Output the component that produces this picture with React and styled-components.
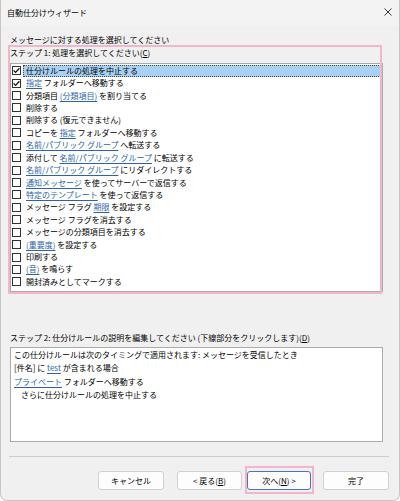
import React from 'react';
import styled, { createGlobalStyle } from 'styled-components';

const GlobalStyle = createGlobalStyle`
  html, body {
    margin: 0;
    padding: 0;
    background: #ffffff;
  }
  body {
    font-family: "Noto Sans CJK JP", "Noto Sans", sans-serif;
  }
`;

const Window = styled.div`
  width: 400px;
  height: 501px;
  box-sizing: border-box;
  background: #f0f0f0;
  border: 1px solid #c6c6c6;
  border-top: none;
  border-radius: 0 0 7px 7px;
  display: flex;
  flex-direction: column;
  font-size: 8px;
  color: #000000;
  overflow: hidden;
`;

const TitleBar = styled.div`
  height: 26px;
  flex-shrink: 0;
  background: #f3f3f3;
  display: flex;
  align-items: center;
  justify-content: space-between;
  padding: 0 7px 0 6px;
`;

const Title = styled.span`
  line-height: 12px;
`;

const CloseBtn = styled.div`
  width: 8px;
  height: 8px;
  display: flex;
  margin-bottom: 3px;
`;

const Content = styled.div`
  padding: 0 16px 0 9px;
  display: flex;
  flex-direction: column;
`;

const Prompt = styled.div`
  margin-top: 8px;
  line-height: 12px;
`;

const Section = styled.div`
  position: relative;
  margin-top: ${(p) => p.$mt || 0}px;

  &::after {
    content: '';
    display: ${(p) => (p.$marked ? 'block' : 'none')};
    position: absolute;
    left: -2.5px;
    top: -2px;
    right: 1.5px;
    bottom: -1.5px;
    border: 2px solid #f4b4ca;
    pointer-events: none;
  }
`;

const Label = styled.div`
  line-height: 12px;
`;

const U = styled.span`
  text-decoration: underline;
  text-underline-offset: 1px;
`;

const Link = styled.span`
  color: #2b63ae;
  text-decoration: underline;
  text-underline-offset: 1.5px;
`;

const ListBox = styled.div`
  margin-top: 4px;
  height: 229px;
  box-sizing: border-box;
  background: #ffffff;
  border: 1px solid #ababab;
  padding-top: 0.5px;
`;

const Row = styled.div`
  height: 12.43px;
  display: flex;
  align-items: center;
`;

const Box = styled.div`
  width: 9px;
  height: 9px;
  box-sizing: border-box;
  border: 1px solid #333333;
  background: #ffffff;
  margin-left: 1px;
  flex-shrink: 0;
  display: flex;
`;

const RowText = styled.div`
  flex: 1;
  margin: 0 1px 0 2px;
  padding-left: 2px;
  height: 12px;
  line-height: 10px;
  box-sizing: border-box;
  white-space: nowrap;
  background: ${(p) => (p.$selected ? '#a9d1f3' : 'transparent')};
  border: 1px dotted ${(p) => (p.$selected ? '#4a4a4a' : 'transparent')};
`;

const DescBox = styled.div`
  margin-top: 3px;
  height: 95px;
  box-sizing: border-box;
  background: #ffffff;
  border: 1px solid #ababab;
  padding: 0 3px;
`;

const DescLine = styled.div`
  line-height: 13.3px;
  white-space: nowrap;
  padding-left: ${(p) => p.$indent || 0}px;
`;

const Footer = styled.div`
  margin-top: 14px;
  padding: 0 10px 0 8px;
`;

const Separator = styled.div`
  height: 1px;
  background: #cdcdcd;
`;

const ButtonRow = styled.div`
  margin-top: 14px;
  display: flex;
  justify-content: flex-end;
`;

const Button = styled.div`
  position: relative;
  width: ${(p) => p.$w}px;
  height: 19px;
  margin-left: ${(p) => p.$ml || 0}px;
  box-sizing: border-box;
  background: #fdfdfd;
  border: 1px solid ${(p) => (p.$primary ? '#4a74b4' : '#d0d0d0')};
  border-radius: 3px;
  display: flex;
  align-items: center;
  justify-content: center;
  line-height: 12px;

  &::after {
    content: '';
    display: ${(p) => (p.$marked ? 'block' : 'none')};
    position: absolute;
    left: -3px;
    top: -6px;
    right: -4px;
    bottom: -5px;
    border: 2px solid #f4b4ca;
    pointer-events: none;
  }
`;

const Check = () => (
  <svg width="7" height="7" viewBox="0 0 7 7">
    <path d="M0.6 3.4 L2.6 5.4 L6.4 1.2" fill="none" stroke="#111" strokeWidth="1.3" />
  </svg>
);

const actions = [
  { checked: true, selected: true, parts: ['仕分けルールの処理を中止する'] },
  { checked: true, parts: [{ link: '指定' }, ' フォルダーへ移動する'] },
  { parts: ['分類項目 ', { link: '(分類項目)' }, ' を割り当てる'] },
  { parts: ['削除する'] },
  { parts: ['削除する (復元できません)'] },
  { parts: ['コピーを ', { link: '指定' }, ' フォルダーへ移動する'] },
  { parts: [{ link: '名前/パブリック グループ' }, ' へ転送する'] },
  { parts: ['添付して ', { link: '名前/パブリック グループ' }, ' に転送する'] },
  { parts: [{ link: '名前/パブリック グループ' }, ' にリダイレクトする'] },
  { parts: [{ link: '通知メッセージ' }, ' を使ってサーバーで返信する'] },
  { parts: [{ link: '特定のテンプレート' }, ' を使って返信する'] },
  { parts: ['メッセージ フラグ ', { link: '期限' }, ' を設定する'] },
  { parts: ['メッセージ フラグを消去する'] },
  { parts: ['メッセージの分類項目を消去する'] },
  { parts: [{ link: '(重要度)' }, ' を設定する'] },
  { parts: ['印刷する'] },
  { parts: [{ link: '(音)' }, ' を鳴らす'] },
  { parts: ['開封済みとしてマークする'] },
];

const renderParts = (parts) =>
  parts.map((p, i) => (typeof p === 'string' ? <span key={i}>{p}</span> : <Link key={i}>{p.link}</Link>));

const App = () => (
  <>
    <GlobalStyle />
    <Window>
      <TitleBar>
        <Title>自動仕分けウィザード</Title>
        <CloseBtn>
          <svg width="8" height="8" viewBox="0 0 8 8">
            <path d="M0.5 0.5 L7.5 7.5 M7.5 0.5 L0.5 7.5" stroke="#222" strokeWidth="0.9" />
          </svg>
        </CloseBtn>
      </TitleBar>
      <Content>
        <Prompt>メッセージに対する処理を選択してください</Prompt>
        <Section $mt={1} $marked>
          <Label>
            ステップ 1: 処理を選択してください(<U>C</U>)
          </Label>
          <ListBox>
            {actions.map((a, i) => (
              <Row key={i}>
                <Box>{a.checked && <Check />}</Box>
                <RowText $selected={a.selected}>{renderParts(a.parts)}</RowText>
              </Row>
            ))}
          </ListBox>
        </Section>
        <Section $mt={40}>
          <Label>
            ステップ 2: 仕分けルールの説明を編集してください (下線部分をクリックします)(<U>D</U>)
          </Label>
          <DescBox>
            <DescLine>この仕分けルールは次のタイミングで適用されます: メッセージを受信したとき</DescLine>
            <DescLine>
              [件名] に <Link>test</Link> が含まれる場合
            </DescLine>
            <DescLine>
              <Link>プライベート</Link> フォルダーへ移動する
            </DescLine>
            <DescLine $indent={7}>さらに仕分けルールの処理を中止する</DescLine>
          </DescBox>
        </Section>
      </Content>
      <Footer>
        <Separator />
        <ButtonRow>
          <Button $w={66}>キャンセル</Button>
          <Button $w={65} $ml={13}>
            &lt; 戻る(<U>B</U>)
          </Button>
          <Button $w={64} $ml={5} $primary $marked>
            次へ(<U>N</U>) &gt;
          </Button>
          <Button $w={66} $ml={12}>
            完了
          </Button>
        </ButtonRow>
      </Footer>
    </Window>
  </>
);

export default App;
